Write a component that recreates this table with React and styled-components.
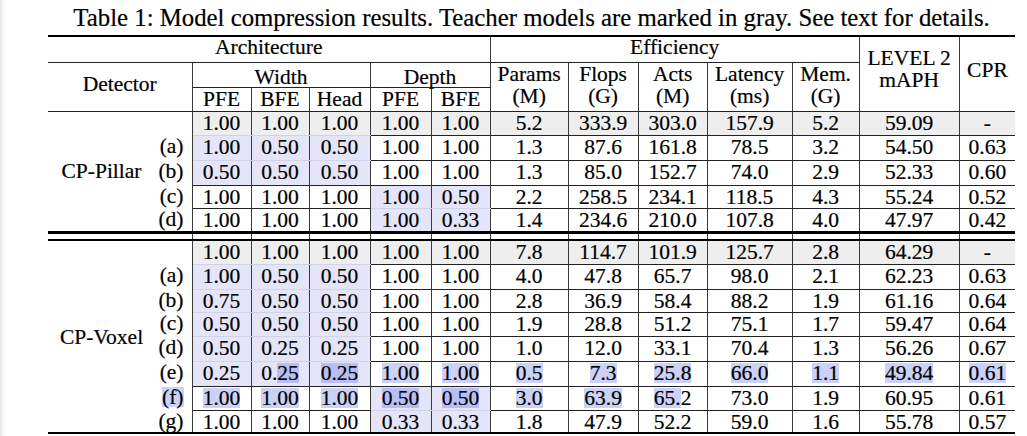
import React from "react";
import styled, { createGlobalStyle } from "styled-components";

const GRAY = "#eeeeee";
const LAV = "#e5e5fa";
const HL = "rgba(64, 84, 226, 0.27)";
const LINE = "#222";
const VLINE = "#3a3a3a";
const FAINT = "#d2d2e6";
const RULE = "2px solid #000";
const MIDRULE = "3px solid #000";

const GlobalStyle = createGlobalStyle`
  html, body {
    margin: 0;
    padding: 0;
  }
  body {
    font-family: "Liberation Serif", "Times New Roman", serif;
    color: #000;
    -webkit-text-stroke: 0.2px #000;
    background: linear-gradient(to right, #e6e6e6 0px, #f6f6f6 3px, #fff 7px);
  }
`;

const Page = styled.div`
  padding-left: 48px;
`;

const Table = styled.table`
  border-collapse: collapse;
  table-layout: fixed;
  width: 967px;
  font-size: 21.5px;
`;

const Caption = styled.caption`
  font-size: 24.8px;
  line-height: 30px;
  padding: 3px 0 2px;
  white-space: nowrap;
  text-align: center;
`;

const HeadRow = styled.tr`
  height: ${(p) => p.$h}px;
`;

const Th = styled.th`
  font-weight: normal;
  padding: ${(p) => p.$pt || 0}px 0 0;
  line-height: ${(p) => p.$lh || 20}px;
  vertical-align: top;
  text-align: center;
  white-space: nowrap;
  border-top: ${(p) => (p.$top ? RULE : "none")};
  border-right: ${(p) => (p.$right ? `1px solid ${VLINE}` : "none")};
  border-bottom: ${(p) => (p.$bottom ? `1px solid ${LINE}` : "none")};
`;

const Row = styled.tr`
  height: ${(p) => p.$h}px;
`;

const NameCell = styled.td`
  padding: 0;
  line-height: 20px;
  vertical-align: middle;
  text-align: center;
  white-space: nowrap;
  border-bottom: ${(p) => p.$below};
`;

const LabelCell = styled.td`
  padding: 1px 8px 0 0;
  line-height: 20px;
  vertical-align: top;
  text-align: right;
  white-space: nowrap;
  border-right: 1px solid ${VLINE};
  border-bottom: ${(p) => p.$below};
`;

const Td = styled.td`
  padding: 1px 0 0;
  line-height: 20px;
  vertical-align: top;
  text-align: center;
  white-space: nowrap;
  background: ${(p) => p.$bg};
  border-right: ${(p) => (p.$right ? `1px solid ${VLINE}` : "none")};
  border-bottom: ${(p) => p.$below};
`;

const GapRow = styled.tr`
  height: 8px;
`;

const GapCell = styled.td`
  padding: 0;
  border-right: ${(p) => (p.$right ? `1px solid ${VLINE}` : "none")};
  border-bottom: ${RULE};
`;

const Mark = styled.span`
  display: inline-block;
  height: 20px;
  line-height: 20px;
  vertical-align: top;
  background: ${HL};
`;

const widths = [107, 37, 59, 58, 61, 61, 59, 78, 70, 69, 85, 67, 100, 56];

const pillar = [
  { id: "", h: 24, teacher: true, arch: ["1.00", "1.00", "1.00", "1.00", "1.00"], eff: ["5.2", "333.9", "303.0", "157.9", "5.2", "59.09", "-"] },
  { id: "(a)", h: 25, shade: "width", arch: ["1.00", "0.50", "0.50", "1.00", "1.00"], eff: ["1.3", "87.6", "161.8", "78.5", "3.2", "54.50", "0.63"] },
  { id: "(b)", h: 25, shade: "width", arch: ["0.50", "0.50", "0.50", "1.00", "1.00"], eff: ["1.3", "85.0", "152.7", "74.0", "2.9", "52.33", "0.60"] },
  { id: "(c)", h: 23, shade: "depth", arch: ["1.00", "1.00", "1.00", "1.00", "0.50"], eff: ["2.2", "258.5", "234.1", "118.5", "4.3", "55.24", "0.52"] },
  { id: "(d)", h: 24, shade: "depth", arch: ["1.00", "1.00", "1.00", "1.00", "0.33"], eff: ["1.4", "234.6", "210.0", "107.8", "4.0", "47.97", "0.42"] },
];

// [..] marks the text that is selected (blue highlight) in the screenshot
const voxel = [
  { id: "", h: 24, teacher: true, arch: ["1.00", "1.00", "1.00", "1.00", "1.00"], eff: ["7.8", "114.7", "101.9", "125.7", "2.8", "64.29", "-"] },
  { id: "(a)", h: 25, shade: "width", arch: ["1.00", "0.50", "0.50", "1.00", "1.00"], eff: ["4.0", "47.8", "65.7", "98.0", "2.1", "62.23", "0.63"] },
  { id: "(b)", h: 23, shade: "width", arch: ["0.75", "0.50", "0.50", "1.00", "1.00"], eff: ["2.8", "36.9", "58.4", "88.2", "1.9", "61.16", "0.64"] },
  { id: "(c)", h: 24, shade: "width", arch: ["0.50", "0.50", "0.50", "1.00", "1.00"], eff: ["1.9", "28.8", "51.2", "75.1", "1.7", "59.47", "0.64"] },
  { id: "(d)", h: 25, shade: "width", arch: ["0.50", "0.25", "0.25", "1.00", "1.00"], eff: ["1.0", "12.0", "33.1", "70.4", "1.3", "56.26", "0.67"] },
  { id: "(e)", h: 25, shade: "width", arch: ["0.25", "0.[25]", "[0.25]", "[1.00]", "[1.00]"], eff: ["[0.5]", "[7.3]", "[25.8]", "[66.0]", "[1.1]", "[49.84]", "[0.61]"] },
  { id: "[(f)]", h: 24, shade: "depth", arch: ["[1.00]", "[1.00]", "[1.00]", "[0.50]", "[0.50]"], eff: ["[3.0]", "[63.9]", "[65.]2", "73.0", "1.9", "60.95", "0.61"] },
  { id: "(g)", h: 23, shade: "depth", arch: ["1.00", "1.00", "1.00", "0.33", "0.33"], eff: ["1.8", "47.9", "52.2", "59.0", "1.6", "55.78", "0.57"] },
];

function bgFor(row, c) {
  if (!row) return null;
  if (row.teacher) return GRAY;
  if (row.shade === "width" && c < 3) return LAV;
  if (row.shade === "depth" && (c === 3 || c === 4)) return LAV;
  return null;
}

function Value({ text }) {
  const parts = text.split(/(\[[^\]]*\])/).filter(Boolean);
  return parts.map((p, i) =>
    p.startsWith("[") ? <Mark key={i}>{p.slice(1, -1)}</Mark> : <React.Fragment key={i}>{p}</React.Fragment>
  );
}

function Group({ name, rows, endRule }) {
  return rows.map((row, r) => {
    const next = rows[r + 1];
    const isLast = r === rows.length - 1;
    const cells = [...row.arch, ...row.eff];
    return (
      <Row key={r} $h={row.h}>
        {r === 0 && (
          <NameCell rowSpan={rows.length} $below={endRule}>
            {name}
          </NameCell>
        )}
        <LabelCell $below={isLast ? endRule : "none"}>
          <Value text={row.id} />
        </LabelCell>
        {cells.map((v, c) => {
          const bg = bgFor(row, c);
          let below = `1px solid ${LINE}`;
          if (isLast) below = endRule;
          else if (bg && bgFor(next, c)) below = `1px solid ${FAINT}`;
          return (
            <Td key={c} $bg={bg || "transparent"} $below={below} $right={c < cells.length - 1}>
              <Value text={v} />
            </Td>
          );
        })}
      </Row>
    );
  });
}

function Gap() {
  return (
    <GapRow>
      <GapCell colSpan={2} $right />
      {Array.from({ length: 12 }, (_, i) => (
        <GapCell key={i} $right={i < 11} />
      ))}
    </GapRow>
  );
}

export default function App() {
  return (
    <Page>
      <GlobalStyle />
      <Table>
        <Caption>
          Table 1: Model compression results. Teacher models are marked in gray. See text for details.
        </Caption>
        <colgroup>
          {widths.map((w, i) => (
            <col key={i} style={{ width: w }} />
          ))}
        </colgroup>
        <thead>
          <HeadRow $h={26}>
            <Th colSpan={7} $top $right $bottom $pt={0}>Architecture</Th>
            <Th colSpan={5} $top $right $bottom $pt={0}>Efficiency</Th>
            <Th rowSpan={3} $top $right $bottom $lh={22} $pt={10}>
              LEVEL 2<br />mAPH
            </Th>
            <Th rowSpan={3} $top $bottom $lh={22} $pt={22}>CPR</Th>
          </HeadRow>
          <HeadRow $h={25}>
            <Th colSpan={2} rowSpan={2} $right $bottom $lh={22} $pt={10}>Detector</Th>
            <Th colSpan={3} $right $bottom $pt={4}>Width</Th>
            <Th colSpan={2} $right $bottom $pt={4}>Depth</Th>
            <Th rowSpan={2} $right $bottom $lh={22}>Params<br />(M)</Th>
            <Th rowSpan={2} $right $bottom $lh={22}>Flops<br />(G)</Th>
            <Th rowSpan={2} $right $bottom $lh={22}>Acts<br />(M)</Th>
            <Th rowSpan={2} $right $bottom $lh={22}>Latency<br />(ms)</Th>
            <Th rowSpan={2} $right $bottom $lh={22}>Mem.<br />(G)</Th>
          </HeadRow>
          <HeadRow $h={24}>
            <Th $right $bottom $pt={1}>PFE</Th>
            <Th $right $bottom $pt={1}>BFE</Th>
            <Th $right $bottom $pt={1}>Head</Th>
            <Th $right $bottom $pt={1}>PFE</Th>
            <Th $right $bottom $pt={1}>BFE</Th>
          </HeadRow>
        </thead>
        <tbody>
          <Group name="CP-Pillar" rows={pillar} endRule={MIDRULE} />
          <Gap />
          <Group name="CP-Voxel" rows={voxel} endRule={RULE} />
        </tbody>
      </Table>
    </Page>
  );
}
